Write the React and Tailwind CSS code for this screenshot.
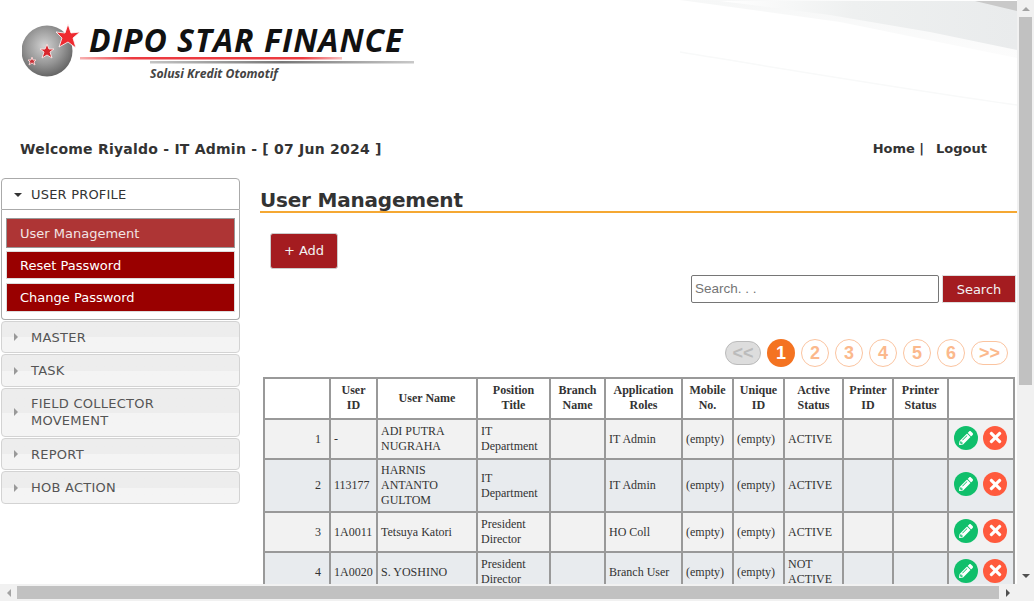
import React from "react";
import { FaPencilAlt, FaTimes } from "react-icons/fa";

const verdana = "font-['DejaVu_Sans','Liberation_Sans',sans-serif]";

const columns = [66, 47, 100, 73, 55, 77, 51, 51, 59, 50, 55, 66];

const headers = ["", "User ID", "User Name", "Position Title", "Branch Name", "Application Roles", "Mobile No.", "Unique ID", "Active Status", "Printer ID", "Printer Status", ""];

const rows = [
  { no: 1, id: "-", name: "ADI PUTRA NUGRAHA", title: "IT Department", role: "IT Admin", status: "ACTIVE", height: "h-[40px]" },
  { no: 2, id: "113177", name: "HARNIS ANTANTO GULTOM", title: "IT Department", role: "IT Admin", status: "ACTIVE", height: "h-[53px]" },
  { no: 3, id: "1A0011", name: "Tetsuya Katori", title: "President Director", role: "HO Coll", status: "ACTIVE", height: "h-[40px]" },
  { no: 4, id: "1A0020", name: "S. YOSHINO", title: "President Director", role: "Branch User", status: "NOT ACTIVE", height: "h-[40px]" },
];

const Logo = () => (
  <div className="relative h-[70px] w-[400px]">
    <svg className="absolute left-0 top-0" width="400" height="70" viewBox="0 0 400 70">
      <defs>
        <radialGradient id="globe" cx="45%" cy="40%" r="65%">
          <stop offset="0%" stopColor="#d2d2d2" />
          <stop offset="55%" stopColor="#969696" />
          <stop offset="100%" stopColor="#5c5c5c" />
        </radialGradient>
        <linearGradient id="redLine" x1="0" x2="1" y1="0" y2="0">
          <stop offset="0%" stopColor="#f7b0b0" />
          <stop offset="20%" stopColor="#ec3a40" />
          <stop offset="85%" stopColor="#ec3a40" />
          <stop offset="100%" stopColor="#f7c0c0" />
        </linearGradient>
        <linearGradient id="grayLine" x1="0" x2="1" y1="0" y2="0">
          <stop offset="0%" stopColor="#c4c4c4" />
          <stop offset="50%" stopColor="#777777" />
          <stop offset="100%" stopColor="#c9c9c9" />
        </linearGradient>
      </defs>
      <circle cx="25" cy="27" r="25.5" fill="url(#globe)" />
      <polygon fill="#ee2a30" stroke="#ffffff" strokeWidth="0.8" points="46,0 49,9 58,8 51,14 54,24 46,18 37,23 40,14 34,8 43,9" />
      <polygon fill="#d8262c" stroke="#f4dede" strokeWidth="1" points="25,20 27,25 32,25 28,28 30,34 25,31 20,34 22,28 18,25 23,25" />
      <polygon fill="#c8343a" stroke="#f4d0d0" strokeWidth="1" points="10,33 11,36 14,36 12,38 13,41 10,39 7,41 8,38 6,36 9,36" />
      <rect x="58" y="33" width="262" height="2.5" fill="url(#redLine)" />
      <rect x="128" y="37" width="264" height="2.5" fill="url(#grayLine)" />
    </svg>
    <div className="absolute left-[67px] top-[-2px] whitespace-nowrap font-['Open_Sans',sans-serif] text-[32px] font-bold italic leading-[36px] tracking-[1px] text-[#111111]">
      DIPO STAR FINANCE
    </div>
    <div className="absolute left-[128px] top-[42px] whitespace-nowrap font-['Open_Sans',sans-serif] text-[12.2px] font-bold italic leading-[16px] text-[#444444]">
      Solusi Kredit Otomotif
    </div>
  </div>
);

const Swoosh = () => (
  <svg className="absolute right-0 top-0" width="337" height="110" viewBox="0 0 337 110">
    <defs>
      <linearGradient id="band" x1="0" x2="1" y1="0" y2="0">
        <stop offset="0%" stopColor="#ffffff" />
        <stop offset="45%" stopColor="#eef0f0" />
        <stop offset="100%" stopColor="#e9ebec" />
      </linearGradient>
      <linearGradient id="bandFade" x1="0" x2="0" y1="0" y2="1">
        <stop offset="0%" stopColor="#f6f7f7" />
        <stop offset="100%" stopColor="#fcfcfc" />
      </linearGradient>
    </defs>
    <polygon fill="url(#bandFade)" points="0,0 337,1 337,58 160,22" />
    <polygon fill="url(#band)" points="40,1 337,1 337,50 250,32 150,15" />
    <polygon fill="#c9c9c9" points="295,1 337,1 337,11" />
    <path d="M0 52 C110 70 230 90 337 105" fill="none" stroke="#f8f9f9" strokeWidth="1.5" />
  </svg>
);

const SideItem = ({ label, height }) => (
  <div className={`flex items-center rounded-[4px] border border-[#d3d3d3] bg-gradient-to-b from-[#ededed] from-50% to-[#f4f4f4] to-50% pl-[12px] text-[13px] leading-[17px] tracking-[0.25px] text-[#555555] ${height}`}>
    <span className="mr-[13px] h-0 w-0 border-y-[4px] border-l-[4px] border-y-transparent border-l-[#999999]" />
    <span className="w-[170px]">{label}</span>
  </div>
);

const Sidebar = () => (
  <div className={`ml-px w-[239px] shrink-0 ${verdana}`}>
    <div className="flex h-[32px] items-center rounded-t-[4px] border border-[#aaaaaa] bg-white pl-[12px] pt-px text-[13px] tracking-[0.2px] text-[#333333]">
      <span className="mr-[9px] h-0 w-0 border-x-[4px] border-t-[4px] border-x-transparent border-t-[#333333]" />
      USER PROFILE
    </div>
    <div className="flex flex-col rounded-b-[4px] border border-t-0 border-[#aaaaaa] bg-white px-[4px] pb-[7px] pt-[8px] text-[13px] text-white">
      <div className="flex h-[30px] items-center border border-[#999999] bg-[#ae3535] pl-[13px] pt-px text-[#f2e4e4]">User Management</div>
      <div className="mt-[3px] flex h-[28px] items-center border border-[#dddddd] bg-[#990000] pl-[13px] pt-px">Reset Password</div>
      <div className="mt-[4px] flex h-[29px] items-center border border-[#dddddd] bg-[#990000] pl-[13px] pt-px">Change Password</div>
    </div>
    <div className="mt-px flex flex-col gap-px">
      <SideItem label="MASTER" height="h-[32px]" />
      <SideItem label="TASK" height="h-[33px]" />
      <SideItem label="FIELD COLLECTOR MOVEMENT" height="h-[49px] pb-[2px]" />
      <SideItem label="REPORT" height="h-[32px]" />
      <SideItem label="HOB ACTION" height="h-[33px]" />
    </div>
  </div>
);

const Pagination = () => (
  <div className="mr-[9px] mt-[36px] flex items-center justify-end gap-[6px] font-['Liberation_Sans',Arial,sans-serif] text-[18px] font-bold leading-none">
    <span className="flex h-[24px] w-[36px] items-center justify-center rounded-full border border-[#bbbbbb] bg-[#dddddd] text-[#bbbbbb]">&lt;&lt;</span>
    <span className="flex h-[28px] w-[28px] items-center justify-center rounded-full bg-[#f47321] text-white">1</span>
    {[2, 3, 4, 5, 6].map((n) => (
      <span key={n} className="flex h-[28px] w-[28px] items-center justify-center rounded-full border border-[#fbc4a0] text-[#fbb98d]">{n}</span>
    ))}
    <span className="flex h-[24px] w-[37px] items-center justify-center rounded-full border border-[#fbc4a0] text-[#fbb98d]">&gt;&gt;</span>
  </div>
);

const UserTable = () => (
  <table className="ml-[3px] mt-[10px] table-fixed border-collapse border-2 border-[#999999] bg-white font-['Liberation_Serif','Times_New_Roman',serif] text-[12px] leading-[15px] text-[#333333]" style={{ width: 750 }}>
    <colgroup>
      {columns.map((w, i) => (
        <col key={i} style={{ width: w }} />
      ))}
    </colgroup>
    <thead>
      <tr>
        {headers.map((h, i) => (
          <th key={i} className="border-2 border-[#999999] px-[3px] pb-[5px] pt-[4px] text-center font-bold">{h}</th>
        ))}
      </tr>
    </thead>
    <tbody>
      {rows.map((r) => (
        <tr key={r.no} className={`${r.height} ${r.no % 2 ? "bg-[#f2f2f2]" : "bg-[#e8ebee]"}`}>
          <td className="border-2 border-[#999999] pr-[8px] text-right">{r.no}</td>
          <td className="border-2 border-[#999999] px-[3px]">{r.id}</td>
          <td className="border-2 border-[#999999] px-[3px]">{r.name}</td>
          <td className="border-2 border-[#999999] px-[3px]">{r.title}</td>
          <td className="border-2 border-[#999999] px-[3px]"></td>
          <td className="border-2 border-[#999999] px-[3px]">{r.role}</td>
          <td className="border-2 border-[#999999] px-[3px]">(empty)</td>
          <td className="border-2 border-[#999999] px-[3px]">(empty)</td>
          <td className="border-2 border-[#999999] px-[3px]">{r.status}</td>
          <td className="border-2 border-[#999999] px-[3px]"></td>
          <td className="border-2 border-[#999999] px-[3px]"></td>
          <td className="border-2 border-[#999999] p-0">
            <div className="flex items-center justify-center gap-[5px] pb-[3px] pr-px">
              <span className="flex h-[24px] w-[24px] items-center justify-center rounded-full bg-[#10bf6b] text-[14px] text-white"><FaPencilAlt /></span>
              <span className="flex h-[24px] w-[24px] items-center justify-center rounded-full bg-[#ff5a3d] text-[17px] text-white"><FaTimes /></span>
            </div>
          </td>
        </tr>
      ))}
    </tbody>
  </table>
);

const App = () => (
  <div className="flex h-[601px] w-[1034px] overflow-hidden bg-white">
    <div className="flex min-w-0 flex-1 flex-col">
      <div className="relative min-h-0 flex-1 overflow-hidden">
        <Swoosh />
        <div className={`relative h-[178px] ${verdana}`}>
          <div className="pl-[22px] pt-[24px]"><Logo /></div>
          <div className="mt-[46px] flex items-center justify-between pl-[20px] pr-[30px] text-[14px] font-bold leading-[18px] tracking-[0.23px] text-[#333333]">
            <span>Welcome Riyaldo - IT Admin - [ 07 Jun 2024 ]</span>
            <span className="text-[13px] tracking-normal">Home |<span className="ml-[12px]">Logout</span></span>
          </div>
        </div>
        <div className="relative flex">
          <Sidebar />
          <div className="ml-[20px] min-w-0 flex-1">
            <h1 className={`mt-[10px] border-b-2 border-[#f5a833] pt-[2px] text-[20px] font-bold leading-[21px] tracking-[-0.2px] text-[#333333] ${verdana}`}>User Management</h1>
            <button className={`ml-[10px] mt-[20px] block h-[36px] w-[68px] rounded-[3px] border border-[#cccccc] bg-[#a41c20] text-[13px] text-[#f2f2f2] ${verdana}`}>+ Add</button>
            <div className="mt-[6px] flex justify-end gap-[3px] pr-px">
              <input placeholder="Search. . ." className="h-[28px] w-[248px] rounded-[2px] border border-[#767676] bg-white px-[3px] pb-[2px] font-['Liberation_Sans',Arial,sans-serif] text-[13.5px] placeholder:text-[#757575]" />
              <button className={`h-[28px] w-[74px] border border-[#dddddd] bg-[#a41c20] pt-px text-[13px] text-[#f2f2f2] ${verdana}`}>Search</button>
            </div>
            <Pagination />
            <UserTable />
          </div>
        </div>
      </div>
      {/* horizontal scrollbar */}
      <div className="flex h-[17px] shrink-0 items-center bg-[#f1f1f1]">
        <div className="flex w-[17px] justify-center"><span className="h-0 w-0 border-y-[4px] border-r-[4px] border-y-transparent border-r-[#a3a3a3]" /></div>
        <div className="h-[13px] flex-1 bg-[#c1c1c1]" />
        <div className="flex w-[18px] justify-center"><span className="h-0 w-0 border-y-[4px] border-l-[4px] border-y-transparent border-l-[#505050]" /></div>
      </div>
    </div>
    {/* vertical scrollbar */}
    <div className="flex w-[17px] shrink-0 flex-col items-center bg-[#f1f1f1]">
      <div className="flex h-[17px] items-center justify-center"><span className="h-0 w-0 border-x-[4px] border-b-[4px] border-x-transparent border-b-[#a3a3a3]" /></div>
      <div className="h-[368px] w-[13px] bg-[#c1c1c1]" />
      <div className="mb-[17px] mt-auto flex h-[17px] items-center justify-center"><span className="h-0 w-0 border-x-[4px] border-t-[4px] border-x-transparent border-t-[#505050]" /></div>
    </div>
  </div>
);

export default App;
